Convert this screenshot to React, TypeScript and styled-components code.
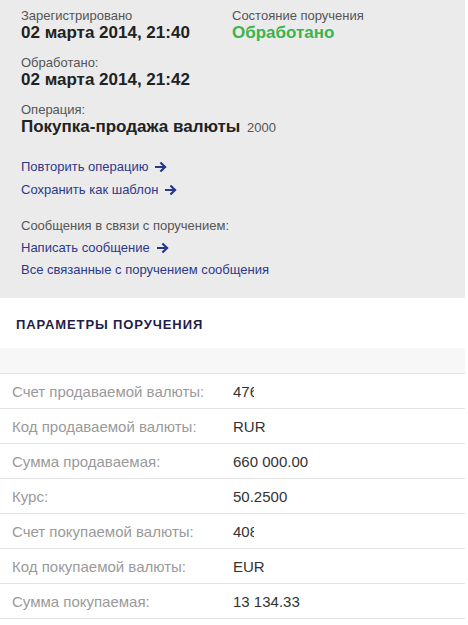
import React from "react";
import styled, { createGlobalStyle } from "styled-components";

const Global = createGlobalStyle`
  html, body { margin: 0; padding: 0; background: #ffffff; }
  body { font-family: "Liberation Sans", Arial, sans-serif; }
`;

const Page = styled.div`
  width: 465px;
  background: #ffffff;
`;

const Summary = styled.section`
  background: #ebebeb;
  padding: 8px 0 17px 21px;
  display: flex;
  flex-direction: column;
`;

const TopRow = styled.div`
  display: grid;
  grid-template-columns: 211px 1fr;
`;

const Field = styled.div`
  display: flex;
  flex-direction: column;
  margin-bottom: 13px;
`;

const Label = styled.div`
  font-size: 13px;
  line-height: 15px;
  color: #555555;
`;

const Value = styled.div<{ $tone?: "green" }>`
  font-size: 17px;
  line-height: 19px;
  font-weight: bold;
  color: ${(p) => (p.$tone === "green" ? "#3cb34b" : "#222222")};
`;

const Extra = styled.span`
  font-weight: normal;
  font-size: 13px;
  color: #555555;
  margin-left: 3px;
`;

const Links = styled.div<{ $top: number }>`
  display: flex;
  flex-direction: column;
  margin-top: ${(p) => p.$top}px;
`;

const LinkRow = styled.a<{ $h?: number }>`
  font-size: 13px;
  line-height: ${(p) => p.$h ?? 22}px;
  color: #2b398a;
  text-decoration: none;
  display: flex;
  align-items: center;
  gap: 7px;
`;

const Note = styled.div`
  font-size: 13px;
  line-height: 22px;
  color: #555555;
`;

const Arrow = () => (
  <svg width="12" height="10" viewBox="0 0 12 10">
    <path d="M1 5 H10 M6.2 1.2 L10 5 L6.2 8.8" fill="none" stroke="#2b398a" strokeWidth="2.2" strokeLinecap="square" />
  </svg>
);

const Params = styled.section`
  display: flex;
  flex-direction: column;
`;

const Heading = styled.h2`
  margin: 0;
  padding: 19px 0 16px 16px;
  font-size: 13px;
  line-height: 15px;
  font-weight: bold;
  letter-spacing: 0.9px;
  color: #1f1e46;
`;

const Band = styled.div`
  height: 25px;
  background: #f7f7f7;
  border-bottom: 1px solid #e2e2e2;
`;

const Row = styled.div`
  display: grid;
  grid-template-columns: 221px 1fr;
  height: 34px;
  align-items: center;
  border-bottom: 1px solid #e2e2e2;
  padding-left: 12px;
  font-size: 15px;
`;

const RowLabel = styled.span`
  color: #9a9a9a;
`;

const RowValue = styled.span<{ $clip?: boolean }>`
  color: #333333;
  white-space: nowrap;
  overflow: hidden;
  max-width: ${(p) => (p.$clip ? "21px" : "none")};
`;

const rows: { label: string; value: string; clip?: boolean }[] = [
  { label: "Счет продаваемой валюты:", value: "47600000000000000000", clip: true },
  { label: "Код продаваемой валюты:", value: "RUR" },
  { label: "Сумма продаваемая:", value: "660 000.00" },
  { label: "Курс:", value: "50.2500" },
  { label: "Счет покупаемой валюты:", value: "40800000000000000000", clip: true },
  { label: "Код покупаемой валюты:", value: "EUR" },
  { label: "Сумма покупаемая:", value: "13 134.33" },
];

export default function App() {
  return (
    <Page>
      <Global />
      <Summary>
        <TopRow>
          <Field>
            <Label>Зарегистрировано</Label>
            <Value>02 марта 2014, 21:40</Value>
          </Field>
          <Field>
            <Label>Состояние поручения</Label>
            <Value $tone="green">Обработано</Value>
          </Field>
        </TopRow>
        <Field>
          <Label>Обработано:</Label>
          <Value>02 марта 2014, 21:42</Value>
        </Field>
        <Field>
          <Label>Операция:</Label>
          <Value>
            Покупка-продажа валюты<Extra> 2000</Extra>
          </Value>
        </Field>
        <Links $top={5}>
          <LinkRow href="#" $h={23}>Повторить операцию <Arrow /></LinkRow>
          <LinkRow href="#" $h={23}>Сохранить как шаблон <Arrow /></LinkRow>
        </Links>
        <Links $top={14}>
          <Note>Сообщения в связи с поручением:</Note>
          <LinkRow href="#">Написать сообщение <Arrow /></LinkRow>
          <LinkRow href="#">Все связанные с поручением сообщения</LinkRow>
        </Links>
      </Summary>
      <Params>
        <Heading>ПАРАМЕТРЫ ПОРУЧЕНИЯ</Heading>
        <Band />
        {rows.map((r) => (
          <Row key={r.label}>
            <RowLabel>{r.label}</RowLabel>
            <RowValue $clip={r.clip}>{r.value}</RowValue>
          </Row>
        ))}
      </Params>
    </Page>
  );
}
